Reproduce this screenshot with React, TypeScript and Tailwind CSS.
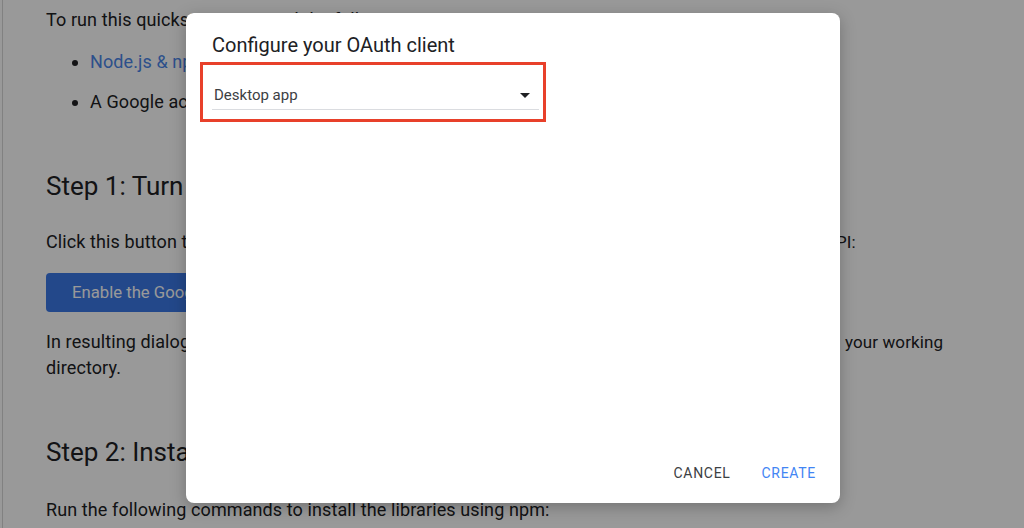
import React from 'react';

const Page: React.FC = () => {
  return (
    <div className="h-[528px] overflow-hidden bg-white text-[#202124] ml-[2px] border-l border-[#d8d8d8]">
      <div className="pl-[43px] pt-[8px] text-[18px] leading-[24px] tracking-[0.1px]">
        <p className="whitespace-nowrap">To run this quickstart, you need the following prerequisites:</p>
        <ul className="mt-[18px] pl-[44px] list-disc space-y-[16px]">
          <li>
            <a className="text-[#4a85e8]">Node.js &amp; npm</a> installed.
          </li>
          <li>A Google account with Google Drive enabled.</li>
        </ul>
        <h2 className="mt-[56px] text-[26px] leading-[32px] tracking-normal">Step 1: Turn on the Drive API</h2>
        <p className="mt-[28px] whitespace-nowrap">
          <span className="inline-block w-[790px] overflow-hidden align-bottom">
            Click this button to create a new Cloud Platform project and automatically enable the Drive A
          </span>
          <span className="text-[17px]">PI:</span>
        </p>
        <button className="mt-[19px] h-[39px] w-[270px] rounded-[4px] bg-[#3b78e7] px-[26px] text-left text-[16.7px] tracking-normal text-white">
          Enable the Google Drive API
        </button>
        <p className="mt-[17px] leading-[26px]">
          <span className="block whitespace-nowrap">
            <span className="inline-block w-[799px] overflow-hidden align-bottom">
              In resulting dialog click DOWNLOAD CLIENT CONFIGURATION and save the file credentials.json to
            </span>
            <span className="text-[17px]">your working</span>
          </span>
          <span className="block">directory.</span>
        </p>
        <h2 className="mt-[55px] text-[26px] leading-[32px] tracking-normal">Step 2: Install the client library</h2>
        <p className="mt-[30px] whitespace-nowrap">Run the following commands to install the libraries using npm:</p>
      </div>
    </div>
  );
};

const Dialog: React.FC = () => {
  return (
    <div className="flex h-[490px] w-[654px] flex-col rounded-[8px] bg-white shadow-[0_4px_16px_rgba(0,0,0,0.25)]">
      <h1 className="pl-[26px] pt-[20px] text-[20px] leading-[24px] text-[#202124]">
        Configure your OAuth client
      </h1>
      <div className="ml-[14px] mt-[5px] box-border h-[60px] w-[346px] border-[3px] border-[#e8402a] pl-[9px] pr-[4px] pt-[18px]">
        <div className="flex items-center justify-between border-b border-[#dadce0] pb-[2px] pl-[2px] pr-[9px]">
          <span className="text-[15px] leading-[24px] text-[#3c4043]">Desktop app</span>
          <svg width="10" height="5" viewBox="0 0 10 5">
            <path d="M0 0 L10 0 L5 5 Z" fill="#202124" />
          </svg>
        </div>
      </div>
      <div className="mt-auto flex justify-end gap-[15px] pb-[12px] pr-[16px]">
        <button className="h-[36px] px-[8px] text-[14px] tracking-[0.7px] text-[#3c4043]">
          CANCEL
        </button>
        <button className="h-[36px] px-[8px] text-[14px] tracking-[0.7px] text-[#4285f4]">
          CREATE
        </button>
      </div>
    </div>
  );
};

export default function App() {
  return (
    <div className="relative h-[528px] w-[1024px] overflow-hidden font-['Roboto',sans-serif]">
      <Page />
      <div className="absolute inset-0 flex items-start bg-black/40 pl-[186px] pt-[13px]">
        <Dialog />
      </div>
    </div>
  );
}
